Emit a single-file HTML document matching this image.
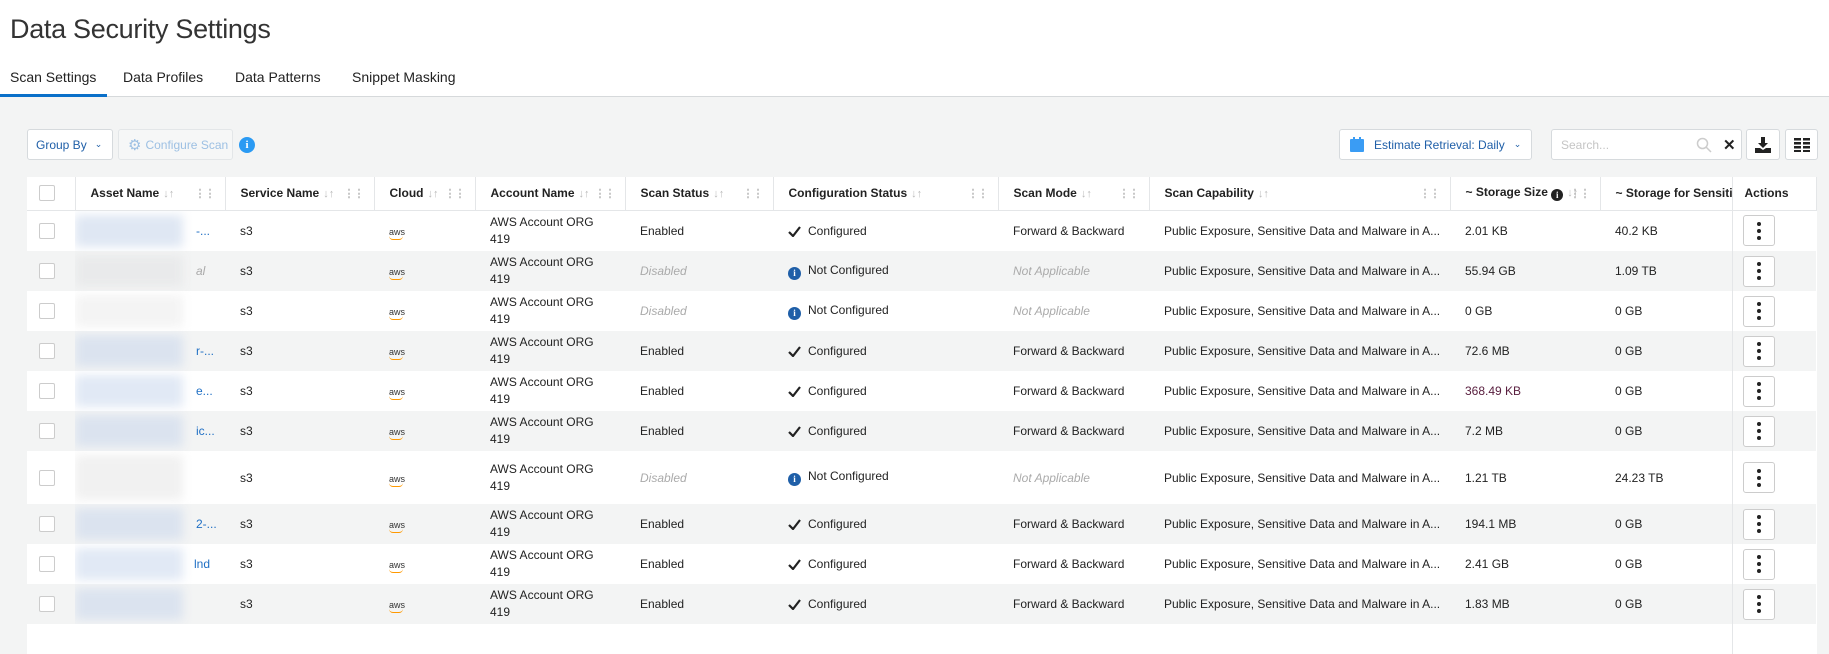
<!DOCTYPE html>
<html><head><meta charset="utf-8"><style>
*{box-sizing:border-box;margin:0;padding:0}
body{width:1829px;height:638px;overflow:hidden;background:#f3f4f4;font-family:"Liberation Sans",sans-serif;color:#222;font-size:12px;position:relative}
.top{position:absolute;left:0;top:0;width:1829px;height:97px;background:#fff;border-bottom:1px solid #d6d9db}
h1{position:absolute;left:10px;top:14px;font-size:27px;font-weight:400;color:#333;letter-spacing:-0.3px}
.tab{position:absolute;top:69px;font-size:14px;color:#222}
.ul{position:absolute;left:0;top:94px;width:107px;height:3px;background:#0a70c9}
.btn{position:absolute;background:#fff;border:1px solid #d6dadd;border-radius:3px;height:31px;top:129px;font-size:12px;display:flex;align-items:center}
table{position:absolute;left:27px;top:177px;border-collapse:collapse;table-layout:fixed;width:1789px;background:#fff}
th{height:33px;text-align:left;font-size:12px;font-weight:bold;color:#222;border-right:1px solid #e4e6e8;border-bottom:1px solid #e4e6e8;padding-left:15px;position:relative;white-space:nowrap;overflow:hidden}
td{font-size:12px;padding-left:15px;white-space:nowrap;overflow:hidden;color:#222}
tr.g td{background:#f3f4f4}
.s{color:#bbb;font-weight:normal;font-size:11px;margin-left:4px}
.d{position:absolute;right:10px;top:10px;color:#bbb;font-size:11px;letter-spacing:-1px}
.cb{width:16px;height:16px;border:1px solid #ccc;border-radius:2px;background:#fff;margin-left:-2px}
.blur{position:absolute;left:0;top:4px;width:108px;bottom:4px;filter:blur(5px)}
.dis{color:#aaa;font-style:italic}
.kb{width:32px;height:31px;border:1px solid #ccc;border-radius:3px;background:#fff;margin-left:-3px;display:flex;flex-direction:column;align-items:center;justify-content:center;gap:3px}
.kb i{width:4px;height:4px;border-radius:2px;background:#222;display:block}
.act{box-shadow:-4px 0 5px rgba(0,0,0,.06);border-left:1px solid #e4e6e8}
.aws{font-size:9px;color:#333;position:relative;display:inline-block;line-height:9px}
.aws:after{content:"";position:absolute;left:0;bottom:-3px;width:14px;height:3px;border-bottom:1.5px solid #f90;border-radius:0 0 8px 8px}
.info{display:inline-block;width:13px;height:13px;border-radius:50%;background:#1f5fa8;color:#fff;font-size:9px;font-weight:bold;text-align:center;line-height:13px;font-family:"Liberation Serif",serif;vertical-align:-2px;margin-right:7px}
.chk{display:inline-block;margin-right:7px;vertical-align:-2px}
</style></head><body>
<div class="top">
<h1>Data Security Settings</h1>
<div class="tab" style="left:10px">Scan Settings</div>
<div class="tab" style="left:123px">Data Profiles</div>
<div class="tab" style="left:235px">Data Patterns</div>
<div class="tab" style="left:352px">Snippet Masking</div>
<div class="ul"></div>
</div>
<div class="btn" style="left:27px;width:86px;padding-left:8px;color:#1f5fa8">Group By <span style="margin-left:8px;font-size:9px">&#8964;</span></div>
<div class="btn" style="left:118px;width:115px;padding-left:9px;color:#9dc0e3;border-color:#e3e6e8;background:#f6f7f7"><span style="font-size:15px;margin-right:4px">&#9881;</span>Configure Scan</div>
<div style="position:absolute;left:239px;top:137px;width:16px;height:16px;border-radius:50%;background:#2a9af3;color:#fff;font:bold 11px 'Liberation Serif',serif;text-align:center;line-height:16px">i</div>
<div class="btn" style="left:1339px;width:193px;padding-left:10px;color:#1f5fa8;font-size:12px"><svg width="14" height="15" viewBox="0 0 14 15" style="margin-right:10px"><rect x="0" y="2" width="14" height="13" rx="1" fill="#3a9cf4"/><rect x="3" y="0" width="2" height="4" fill="#3a9cf4"/><rect x="9" y="0" width="2" height="4" fill="#3a9cf4"/></svg>Estimate Retrieval: Daily <span style="margin-left:9px;font-size:9px">&#8964;</span></div>
<div class="btn" style="left:1551px;width:191px;padding-left:9px;color:#c5c5c5">Search...<svg width="16" height="16" viewBox="0 0 16 16" style="position:absolute;left:144px;top:7px"><circle cx="6.5" cy="6.5" r="5" fill="none" stroke="#ccc" stroke-width="1.5"/><path d="M10 10l5 5" stroke="#ccc" stroke-width="1.5"/></svg><span style="position:absolute;left:171px;top:6px;color:#222;font-weight:bold;font-size:15px">&#10005;</span></div>
<div class="btn" style="left:1746px;width:34px;justify-content:center"><svg width="16" height="16" viewBox="0 0 16 16"><path d="M6 0h4v6h3l-5 5-5-5h3z" fill="#222"/><path d="M0 11h5l3 2 3-2h5v5H0z" fill="#222"/></svg></div>
<div class="btn" style="left:1785px;width:33px;justify-content:center"><svg width="16" height="14" viewBox="0 0 16 14"><g fill="#222"><rect x="0" y="0" width="7" height="2.5"/><rect x="9" y="0" width="7" height="2.5"/><rect x="0" y="4" width="7" height="2.5"/><rect x="9" y="4" width="7" height="2.5"/><rect x="0" y="8" width="7" height="2.5"/><rect x="9" y="8" width="7" height="2.5"/><rect x="0" y="12" width="7" height="2"/><rect x="9" y="12" width="7" height="2"/></g></svg></div>
<table>
<colgroup><col style="width:48px"><col style="width:150px"><col style="width:149px"><col style="width:101px"><col style="width:150px"><col style="width:148px"><col style="width:225px"><col style="width:151px"><col style="width:301px"><col style="width:150px"><col style="width:132px"><col style="width:84px"></colgroup>
<tr><th style="padding-left:14px"><div class="cb"></div></th><th>Asset Name<span class="s">&#8595;&#8593;</span><span class="d">&#8942;&#8942;</span></th><th>Service Name<span class="s">&#8595;&#8593;</span><span class="d">&#8942;&#8942;</span></th><th>Cloud<span class="s">&#8595;&#8593;</span><span class="d">&#8942;&#8942;</span></th><th>Account Name<span class="s">&#8595;&#8593;</span><span class="d">&#8942;&#8942;</span></th><th>Scan Status<span class="s">&#8595;&#8593;</span><span class="d">&#8942;&#8942;</span></th><th>Configuration Status<span class="s">&#8595;&#8593;</span><span class="d">&#8942;&#8942;</span></th><th>Scan Mode<span class="s">&#8595;&#8593;</span><span class="d">&#8942;&#8942;</span></th><th>Scan Capability<span class="s">&#8595;&#8593;</span><span class="d">&#8942;&#8942;</span></th><th>~ Storage Size <span class="info" style="background:#222;margin:0;width:12px;height:12px;line-height:12px">i</span><span class="s">&#8595;&#8593;</span><span class="d">&#8942;&#8942;</span></th><th style="border-right:none">~ Storage for Sensitive</th><th class="act" style="padding-left:12px">Actions</th></tr>
<!--ROWS-->
<tr style="height:41px"><td style="padding-left:14px"><div class="cb"></div></td><td style="position:relative;color:#1f6fc4"><div class="blur" style="background:#dfe7f3"></div><span style="position:relative;left:106px">-...</span></td><td>s3</td><td><span class="aws">aws</span></td><td style="line-height:17px">AWS Account ORG<br>419</td><td>Enabled</td><td><svg class="chk" width="13" height="11" viewBox="0 0 13 11"><path d="M1 6l4 4 7-9" fill="none" stroke="#222" stroke-width="2.2"/></svg>Configured</td><td>Forward &amp; Backward</td><td>Public Exposure, Sensitive Data and Malware in A...</td><td>2.01 KB</td><td>40.2 KB</td><td class="act" style="padding-left:13px"><div class="kb"><i></i><i></i><i></i></div></td></tr>
<tr class="g" style="height:40px"><td style="padding-left:14px"><div class="cb"></div></td><td style="position:relative;color:#aaa"><div class="blur" style="background:#e9eaeb"></div><span style="position:relative;left:106px;font-style:italic">al</span></td><td>s3</td><td><span class="aws">aws</span></td><td style="line-height:17px">AWS Account ORG<br>419</td><td class="dis">Disabled</td><td><span class="info">i</span>Not Configured</td><td class="dis">Not Applicable</td><td>Public Exposure, Sensitive Data and Malware in A...</td><td>55.94 GB</td><td>1.09 TB</td><td class="act" style="padding-left:13px"><div class="kb"><i></i><i></i><i></i></div></td></tr>
<tr style="height:40px"><td style="padding-left:14px"><div class="cb"></div></td><td style="position:relative"><div class="blur" style="background:#f4f4f4"></div></td><td>s3</td><td><span class="aws">aws</span></td><td style="line-height:17px">AWS Account ORG<br>419</td><td class="dis">Disabled</td><td><span class="info">i</span>Not Configured</td><td class="dis">Not Applicable</td><td>Public Exposure, Sensitive Data and Malware in A...</td><td>0 GB</td><td>0 GB</td><td class="act" style="padding-left:13px"><div class="kb"><i></i><i></i><i></i></div></td></tr>
<tr class="g" style="height:40px"><td style="padding-left:14px"><div class="cb"></div></td><td style="position:relative;color:#1f6fc4"><div class="blur" style="background:#dbe3ef"></div><span style="position:relative;left:106px">r-...</span></td><td>s3</td><td><span class="aws">aws</span></td><td style="line-height:17px">AWS Account ORG<br>419</td><td>Enabled</td><td><svg class="chk" width="13" height="11" viewBox="0 0 13 11"><path d="M1 6l4 4 7-9" fill="none" stroke="#222" stroke-width="2.2"/></svg>Configured</td><td>Forward &amp; Backward</td><td>Public Exposure, Sensitive Data and Malware in A...</td><td>72.6 MB</td><td>0 GB</td><td class="act" style="padding-left:13px"><div class="kb"><i></i><i></i><i></i></div></td></tr>
<tr style="height:40px"><td style="padding-left:14px"><div class="cb"></div></td><td style="position:relative;color:#1f6fc4"><div class="blur" style="background:#e1e9f5"></div><span style="position:relative;left:106px">e...</span></td><td>s3</td><td><span class="aws">aws</span></td><td style="line-height:17px">AWS Account ORG<br>419</td><td>Enabled</td><td><svg class="chk" width="13" height="11" viewBox="0 0 13 11"><path d="M1 6l4 4 7-9" fill="none" stroke="#222" stroke-width="2.2"/></svg>Configured</td><td>Forward &amp; Backward</td><td>Public Exposure, Sensitive Data and Malware in A...</td><td style="color:#5a2040">368.49 KB</td><td>0 GB</td><td class="act" style="padding-left:13px"><div class="kb"><i></i><i></i><i></i></div></td></tr>
<tr class="g" style="height:40px"><td style="padding-left:14px"><div class="cb"></div></td><td style="position:relative;color:#1f6fc4"><div class="blur" style="background:#dbe3ef"></div><span style="position:relative;left:106px">ic...</span></td><td>s3</td><td><span class="aws">aws</span></td><td style="line-height:17px">AWS Account ORG<br>419</td><td>Enabled</td><td><svg class="chk" width="13" height="11" viewBox="0 0 13 11"><path d="M1 6l4 4 7-9" fill="none" stroke="#222" stroke-width="2.2"/></svg>Configured</td><td>Forward &amp; Backward</td><td>Public Exposure, Sensitive Data and Malware in A...</td><td>7.2 MB</td><td>0 GB</td><td class="act" style="padding-left:13px"><div class="kb"><i></i><i></i><i></i></div></td></tr>
<tr style="height:53px"><td style="padding-left:14px"><div class="cb"></div></td><td style="position:relative"><div class="blur" style="background:#f1f1f1"></div></td><td>s3</td><td><span class="aws">aws</span></td><td style="line-height:17px">AWS Account ORG<br>419</td><td class="dis">Disabled</td><td><span class="info">i</span>Not Configured</td><td class="dis">Not Applicable</td><td>Public Exposure, Sensitive Data and Malware in A...</td><td>1.21 TB</td><td>24.23 TB</td><td class="act" style="padding-left:13px"><div class="kb"><i></i><i></i><i></i></div></td></tr>
<tr class="g" style="height:40px"><td style="padding-left:14px"><div class="cb"></div></td><td style="position:relative;color:#1f6fc4"><div class="blur" style="background:#dbe3ef"></div><span style="position:relative;left:106px">2-...</span></td><td>s3</td><td><span class="aws">aws</span></td><td style="line-height:17px">AWS Account ORG<br>419</td><td>Enabled</td><td><svg class="chk" width="13" height="11" viewBox="0 0 13 11"><path d="M1 6l4 4 7-9" fill="none" stroke="#222" stroke-width="2.2"/></svg>Configured</td><td>Forward &amp; Backward</td><td>Public Exposure, Sensitive Data and Malware in A...</td><td>194.1 MB</td><td>0 GB</td><td class="act" style="padding-left:13px"><div class="kb"><i></i><i></i><i></i></div></td></tr>
<tr style="height:40px"><td style="padding-left:14px"><div class="cb"></div></td><td style="position:relative;color:#1f6fc4"><div class="blur" style="background:#e1e9f5"></div><span style="position:relative;left:104px">lnd</span></td><td>s3</td><td><span class="aws">aws</span></td><td style="line-height:17px">AWS Account ORG<br>419</td><td>Enabled</td><td><svg class="chk" width="13" height="11" viewBox="0 0 13 11"><path d="M1 6l4 4 7-9" fill="none" stroke="#222" stroke-width="2.2"/></svg>Configured</td><td>Forward &amp; Backward</td><td>Public Exposure, Sensitive Data and Malware in A...</td><td>2.41 GB</td><td>0 GB</td><td class="act" style="padding-left:13px"><div class="kb"><i></i><i></i><i></i></div></td></tr>
<tr class="g" style="height:40px"><td style="padding-left:14px"><div class="cb"></div></td><td style="position:relative"><div class="blur" style="background:#dbe3ef"></div></td><td>s3</td><td><span class="aws">aws</span></td><td style="line-height:17px">AWS Account ORG<br>419</td><td>Enabled</td><td><svg class="chk" width="13" height="11" viewBox="0 0 13 11"><path d="M1 6l4 4 7-9" fill="none" stroke="#222" stroke-width="2.2"/></svg>Configured</td><td>Forward &amp; Backward</td><td>Public Exposure, Sensitive Data and Malware in A...</td><td>1.83 MB</td><td>0 GB</td><td class="act" style="padding-left:13px"><div class="kb"><i></i><i></i><i></i></div></td></tr>
<tr style="height:30px"><td colspan="11"></td><td class="act"></td></tr>
</table>
</body></html>
